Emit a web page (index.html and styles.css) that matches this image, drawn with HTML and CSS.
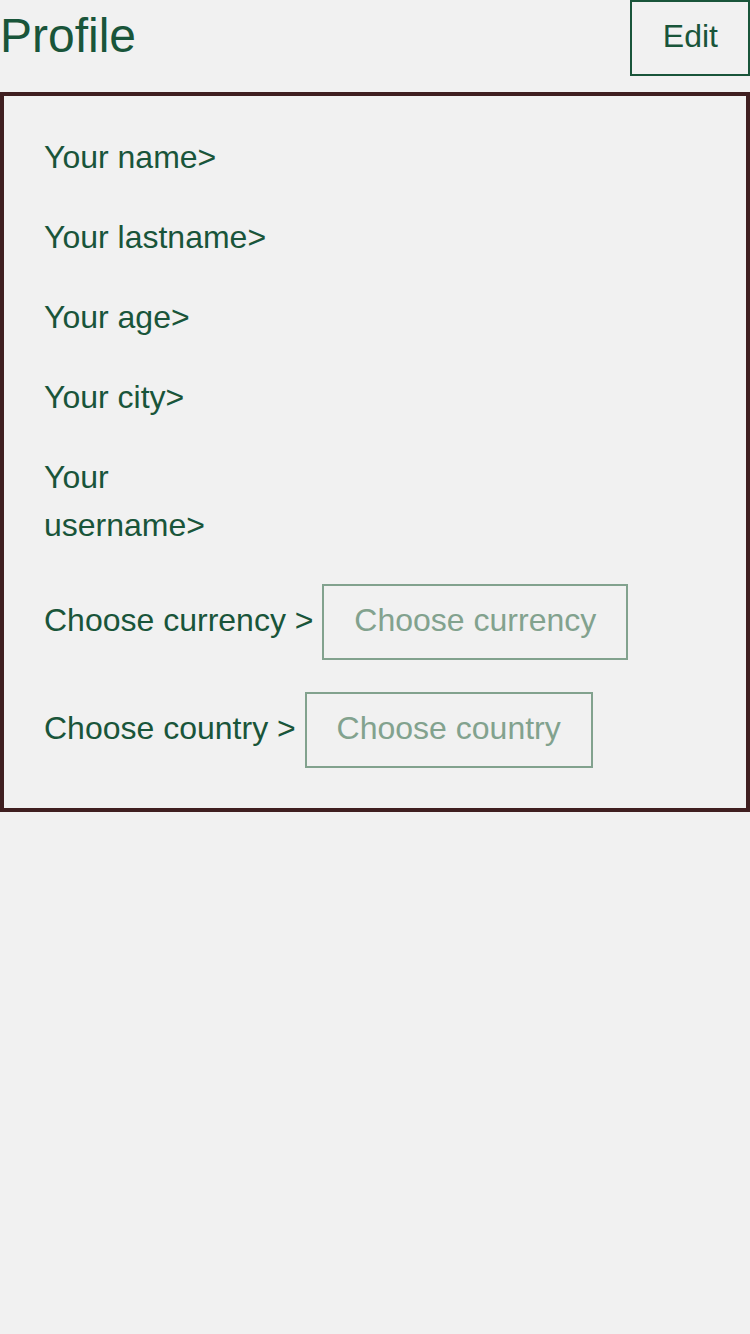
FILE: index.html
```html
<!DOCTYPE html>
<html>
<head>
<meta charset="utf-8">
<link rel="stylesheet" href="styles.css">
</head>
<body>
<header class="header">
  <h1 class="title">Profile</h1>
  <button class="edit-btn">Edit</button>
</header>
<section class="panel">
  <div class="row">Your name&gt;</div>
  <div class="row">Your lastname&gt;</div>
  <div class="row">Your age&gt;</div>
  <div class="row">Your city&gt;</div>
  <div class="row row-narrow">Your username&gt;</div>
  <div class="row row-select row-first-select">Choose currency &gt; <span class="select">Choose currency</span></div>
  <div class="row row-select">Choose country &gt; <span class="select">Choose country</span></div>
</section>
</body>
</html>
```
FILE: styles.css
```css
html, body {
  margin: 0;
  padding: 0;
  background: #f1f1f1;
}
body {
  font-family: "Liberation Sans", Arial, sans-serif;
  color: #19553a;
  width: 750px;
  min-height: 1334px;
}
.header {
  display: flex;
  justify-content: space-between;
  align-items: flex-start;
  margin-bottom: 16px;
}
.title {
  margin: 0;
  font-size: 48px;
  font-weight: normal;
  line-height: 72px;
}
.edit-btn {
  font-family: inherit;
  font-size: 32px;
  line-height: 48px;
  color: #19553a;
  background: transparent;
  border: 2px solid #19553a;
  padding: 10px 30px 14px 31px;
  margin: 0;
}
.panel {
  border: 4px solid #3f1f20;
  padding: 37px 40px 40px;
  display: flex;
  flex-direction: column;
  gap: 32px;
}
.row {
  font-size: 32px;
  line-height: 48px;
}
.row-narrow {
  max-width: 180px;
}
.row-first-select {
  margin-top: 3px;
}
.select {
  display: inline-block;
  border: 2px solid #82a28e;
  color: #82a28e;
  padding: 10px 30px 14px;
}
```
